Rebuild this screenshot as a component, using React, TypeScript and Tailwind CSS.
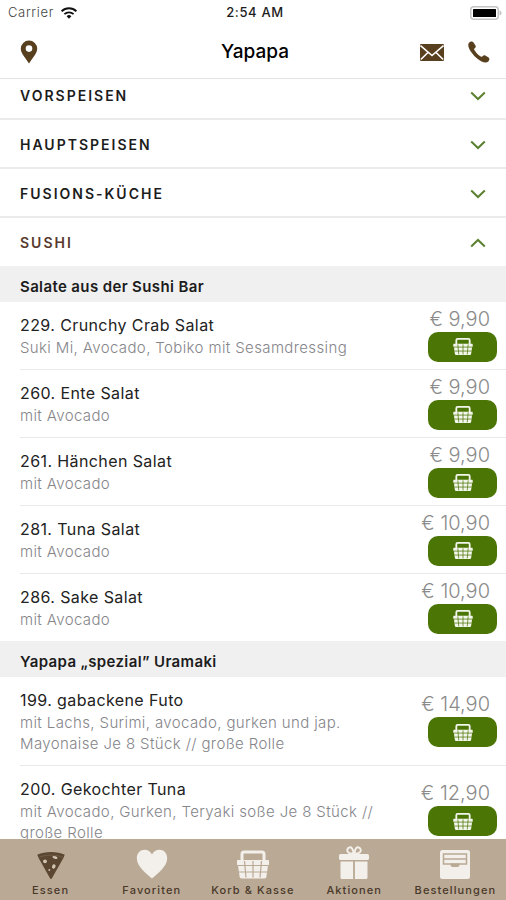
import { useState } from "react";

interface Dish {
  name: string;
  description: string;
  price: string;
}

interface Section {
  title: string;
  dishes: Dish[];
}

const categories = ["Vorspeisen", "Hauptspeisen", "Fusions-Küche", "Sushi"];

const sections: Section[] = [
  {
    title: "Salate aus der Sushi Bar",
    dishes: [
      { name: "229. Crunchy Crab Salat", description: "Suki Mi, Avocado, Tobiko mit Sesamdressing", price: "9,90" },
      { name: "260. Ente Salat", description: "mit Avocado", price: "9,90" },
      { name: "261. Hänchen Salat", description: "mit Avocado", price: "9,90" },
      { name: "281. Tuna Salat", description: "mit Avocado", price: "10,90" },
      { name: "286. Sake Salat", description: "mit Avocado", price: "10,90" },
    ],
  },
  {
    title: "Yapapa „spezial” Uramaki",
    dishes: [
      { name: "199. gabackene Futo", description: "mit Lachs, Surimi, avocado, gurken und jap. Mayonaise Je 8 Stück // große Rolle", price: "14,90" },
      { name: "200. Gekochter Tuna", description: "mit Avocado, Gurken, Teryaki soße Je 8 Stück // große Rolle", price: "12,90" },
    ],
  },
];

const WifiIcon = () => (
  <svg viewBox="0 0 18 13" className="h-3 w-[18px]" fill="none" stroke="#111" strokeWidth="2">
    <path d="M1 4.6a11.5 11.5 0 0 1 16 0" />
    <path d="M4 7.8a7.2 7.2 0 0 1 10 0" />
    <path d="M9 12.6 6.4 10a3.7 3.7 0 0 1 5.2 0z" fill="#111" stroke="none" />
  </svg>
);

const BatteryIcon = () => (
  <svg viewBox="0 0 32 14" className="h-3.5 w-8">
    <rect x="0.75" y="0.75" width="27.5" height="12.5" rx="3" fill="#fff" stroke="#c4c4c4" strokeWidth="1.5" />
    <rect x="3" y="3" width="23" height="8" rx="0.5" fill="#000" />
    <path d="M29.5 4.5c1.6.6 2 1.5 2 2.500s-.4 1.900-2 2.500z" fill="#c4c4c4" />
  </svg>
);

const PinIcon = () => (
  <svg viewBox="0 0 18 24" className="h-6 w-[18px]" fill="#58401f">
    <path fillRule="evenodd" d="M9 .5a8.200 8.200 0 0 0-8.200 8.200C.8 13.500 5.500 17.500 9 23.500c3.500-6 8.200-10 8.200-14.800A8.200 8.200 0 0 0 9 .5zm0 4.800a3.300 3.300 0 1 1 0 6.600 3.300 3.300 0 0 1 0-6.600z" />
  </svg>
);

const MailIcon = () => (
  <svg viewBox="0 0 24 17" className="h-[17px] w-6">
    <rect width="24" height="17" rx="1" fill="#58401f" />
    <path d="M.5 1.500 12 11.500 23.500 1.500M.8 15.500 8.200 8.300M23.200 15.500 15.800 8.300" fill="none" stroke="#fff" strokeWidth="1.600" />
  </svg>
);

const PhoneIcon = () => (
  <svg viewBox="0 0 22 22" className="h-[22px] w-[22px]" fill="#58401f">
    <path d="M1 1.800C2.200.6 4.400.1 5.300 1.300l2.200 3.300c.6 1 .1 1.800-.8 2.600-.7.600-.7 1.200-.2 2 1.500 2.500 3.600 4.600 6.200 6.200.8.500 1.300.5 1.900-.1.900-1 1.700-1.300 2.700-.7l3.300 2c1.300.9.8 2.700-.3 3.900-1.500 1.500-4.200 1.100-6.800-.1C8.500 18 3.500 12.600 1.100 7.600.2 5.600-.2 3.100 1 1.800z" />
  </svg>
);

const ChevronIcon = ({ up }: { up: boolean }) => (
  <svg viewBox="0 0 16 10" className={`h-2.5 w-4 ${up ? "rotate-180" : ""}`} fill="none" stroke="#5a8030" strokeWidth="2">
    <path d="M1.200 1.500 8 8l6.800-6.500" />
  </svg>
);

const BasketIcon = ({ className, line }: { className: string; line: string }) => (
  <svg viewBox="0 0 32 28" className={className}>
    <path d="M5 11V3.500A2 2 0 0 1 7 1.500h18a2 2 0 0 1 2 2V11" fill="none" stroke="currentColor" strokeWidth="3" />
    <path d="M1 9.500h30a1 1 0 0 1 1 1.200V14l-1 1-1.500 10.500A2.500 2.500 0 0 1 27 28H5a2.500 2.500 0 0 1-2.500-2.500L1 15l-1-1v-3.300a1 1 0 0 1 1-1.200z" fill="currentColor" />
    <path d="M1 15h30M2 21.500h28M7.500 10.500 9 27M16 10.500V27M24.500 10.500 23 27" fill="none" stroke={line} strokeWidth="1.200" />
  </svg>
);

const PizzaIcon = () => (
  <svg viewBox="0 0 28 28" className="h-7 w-7">
    <path d="M.3 3.800C8 .2 20 .2 27.700 3.800L26.500 6.800 14.800 27.500c-.4.7-1.200.7-1.600 0L1.500 6.800z" fill="#5b4631" />
    <path d="M2 6.300C9 3.400 19 3.400 26 6.300" fill="none" stroke="#7a6650" strokeWidth="0.700" />
    <g fill="#d3c5b3">
      <ellipse cx="18" cy="6.500" rx="2.600" ry="1.300" transform="rotate(15 18 6.500)" />
      <circle cx="8" cy="10.300" r="1.900" />
      <ellipse cx="16.800" cy="15.500" rx="1.700" ry="2.200" transform="rotate(25 16.800 15.500)" />
      <circle cx="12.300" cy="19" r="0.900" />
    </g>
  </svg>
);

const HeartIcon = () => (
  <svg viewBox="0 0 32 30" className="h-[30px] w-8" fill="currentColor">
    <path d="M16 29.500C10 24 .8 17.500.8 9.200.8 4.300 4.300.8 8.600.8c3.200 0 6 1.700 7.400 4.600C17.400 2.500 20.200.8 23.400.8c4.300 0 7.800 3.500 7.800 8.400 0 8.300-9.200 14.800-15.200 20.300z" />
  </svg>
);

const GiftIcon = () => (
  <svg viewBox="0 0 30 33" className="h-[33px] w-[30px]" fill="currentColor">
    <rect y="8" width="30" height="6" rx="1.500" />
    <path d="M1.500 15.500h12.600V33H3a1.500 1.500 0 0 1-1.500-1.500zM15.900 15.500h12.600v16A1.500 1.500 0 0 1 27 33H15.900z" />
    <g fill="none" stroke="currentColor" strokeWidth="2">
      <path d="M14.500 8C9.500 7.500 7.800 5.800 8.300 3.600 8.900 1.200 11.500.6 13 2.300c1 1.200 1.500 3.200 1.500 5.700z" />
      <path d="M15.500 8c5-.5 6.700-2.200 6.200-4.400C21.100 1.200 18.500.6 17 2.300c-1 1.200-1.500 3.200-1.500 5.700z" />
    </g>
  </svg>
);

const OrdersIcon = () => (
  <svg viewBox="0 0 30 29" className="h-[29px] w-[30px]">
    <rect width="30" height="29" rx="2.500" fill="currentColor" />
    <path d="M3.500 4h23v10h-23zM3.500 9h23" fill="none" stroke="#b9a995" strokeWidth="1.500" />
    <path d="M10.500 13.500h9v1a2.500 2.500 0 0 1-2.500 2.500h-4a2.500 2.500 0 0 1-2.500-2.500z" fill="#b9a995" />
  </svg>
);

const tabs = [
  { label: "Essen", icon: <PizzaIcon /> },
  { label: "Favoriten", icon: <HeartIcon /> },
  { label: "Korb & Kasse", icon: <BasketIcon className="h-[29px] w-8" line="#b9a995" /> },
  { label: "Aktionen", icon: <GiftIcon /> },
  { label: "Bestellungen", icon: <OrdersIcon /> },
];

const DishRow = ({ name, description, price }: Dish) => (
  <li className="ml-5 flex items-center justify-between gap-4 border-b border-[#e9e9e9] pr-[9px] last:border-b-0">
    <div className="py-[11px]">
      <h3 className="text-base leading-6 tracking-wide text-[#222]">{name}</h3>
      <p className="text-[15px] leading-[21px] font-light tracking-wide text-[#85858a]">{description}</p>
    </div>
    <div className="flex shrink-0 flex-col items-end pb-1">
      <span className="pr-[7px] text-xl leading-[26px] font-light text-[#8b8b8b]">€ {price}</span>
      <button aria-label={`${name} in den Korb`} className="flex h-[30px] w-[69px] items-center justify-center rounded-[10px] bg-[#4b7504] text-[#f3f6ec]">
        <BasketIcon className="h-[17px] w-5" line="#4b7504" />
      </button>
    </div>
  </li>
);

const App = () => {
  const [open, setOpen] = useState("Sushi");

  return (
    <div className="flex h-screen flex-col overflow-hidden bg-white font-['Inter','Liberation_Sans',sans-serif] text-[#1c1c1c]">
      <header className="relative z-10 border-b border-[#e4e4e4] bg-white">
        <div className="grid h-[26px] grid-cols-3 items-center pr-1 pl-2 text-[13px] tracking-wider">
          <div className="flex items-center gap-1.5 font-light text-[#444]">
            Carrier <WifiIcon />
          </div>
          <div className="text-center font-medium">2:54 AM</div>
          <div className="flex justify-end"><BatteryIcon /></div>
        </div>
        <div className="grid h-[52px] grid-cols-3 items-center pr-4 pl-5">
          <div className="flex">
            <button aria-label="Standort"><PinIcon /></button>
          </div>
          <h1 className="text-center text-[19px] font-medium text-black">Yapapa</h1>
          <div className="flex items-center justify-end gap-6">
            <button aria-label="E-Mail"><MailIcon /></button>
            <button aria-label="Anrufen"><PhoneIcon /></button>
          </div>
        </div>
      </header>

      {/* the list is scrolled a little way under the header */}
      <main className="min-h-0 flex-1 overflow-hidden">
        <div className="-mt-2">
          {categories.map((category) => {
            const isOpen = category === open;
            return (
              <section key={category}>
                <button
                  aria-expanded={isOpen}
                  onClick={() => setOpen(isOpen ? "" : category)}
                  className={`flex w-full items-center justify-between pt-0.5 pr-5 pl-5 text-sm font-semibold tracking-[2px] uppercase ${isOpen ? "h-12 text-[#57392c]" : "h-[49px] border-b-2 border-[#ebebeb]"}`}
                >
                  {category}
                  <ChevronIcon up={isOpen} />
                </button>
                {isOpen && sections.map((section) => (
                  <div key={section.title}>
                    <h2 className="flex h-9 items-center bg-[#f0f0f0] pt-1.5 pl-5 text-[15px] font-semibold tracking-wide">{section.title}</h2>
                    <ul>
                      {section.dishes.map((dish) => <DishRow key={dish.name} {...dish} />)}
                    </ul>
                  </div>
                ))}
              </section>
            );
          })}
        </div>
      </main>

      <nav className="grid h-[61px] shrink-0 grid-cols-5 bg-[#b9a995]">
        {tabs.map((tab) => (
          <a key={tab.label} href="#" className="flex flex-col items-center text-[#f3efea]">
            <span className="flex h-[42px] items-end justify-center pb-0.5">{tab.icon}</span>
            <span className="text-[11px] leading-[18px] font-medium tracking-widest whitespace-nowrap text-[#4a3829]">{tab.label}</span>
          </a>
        ))}
      </nav>
    </div>
  );
};

export default App;
